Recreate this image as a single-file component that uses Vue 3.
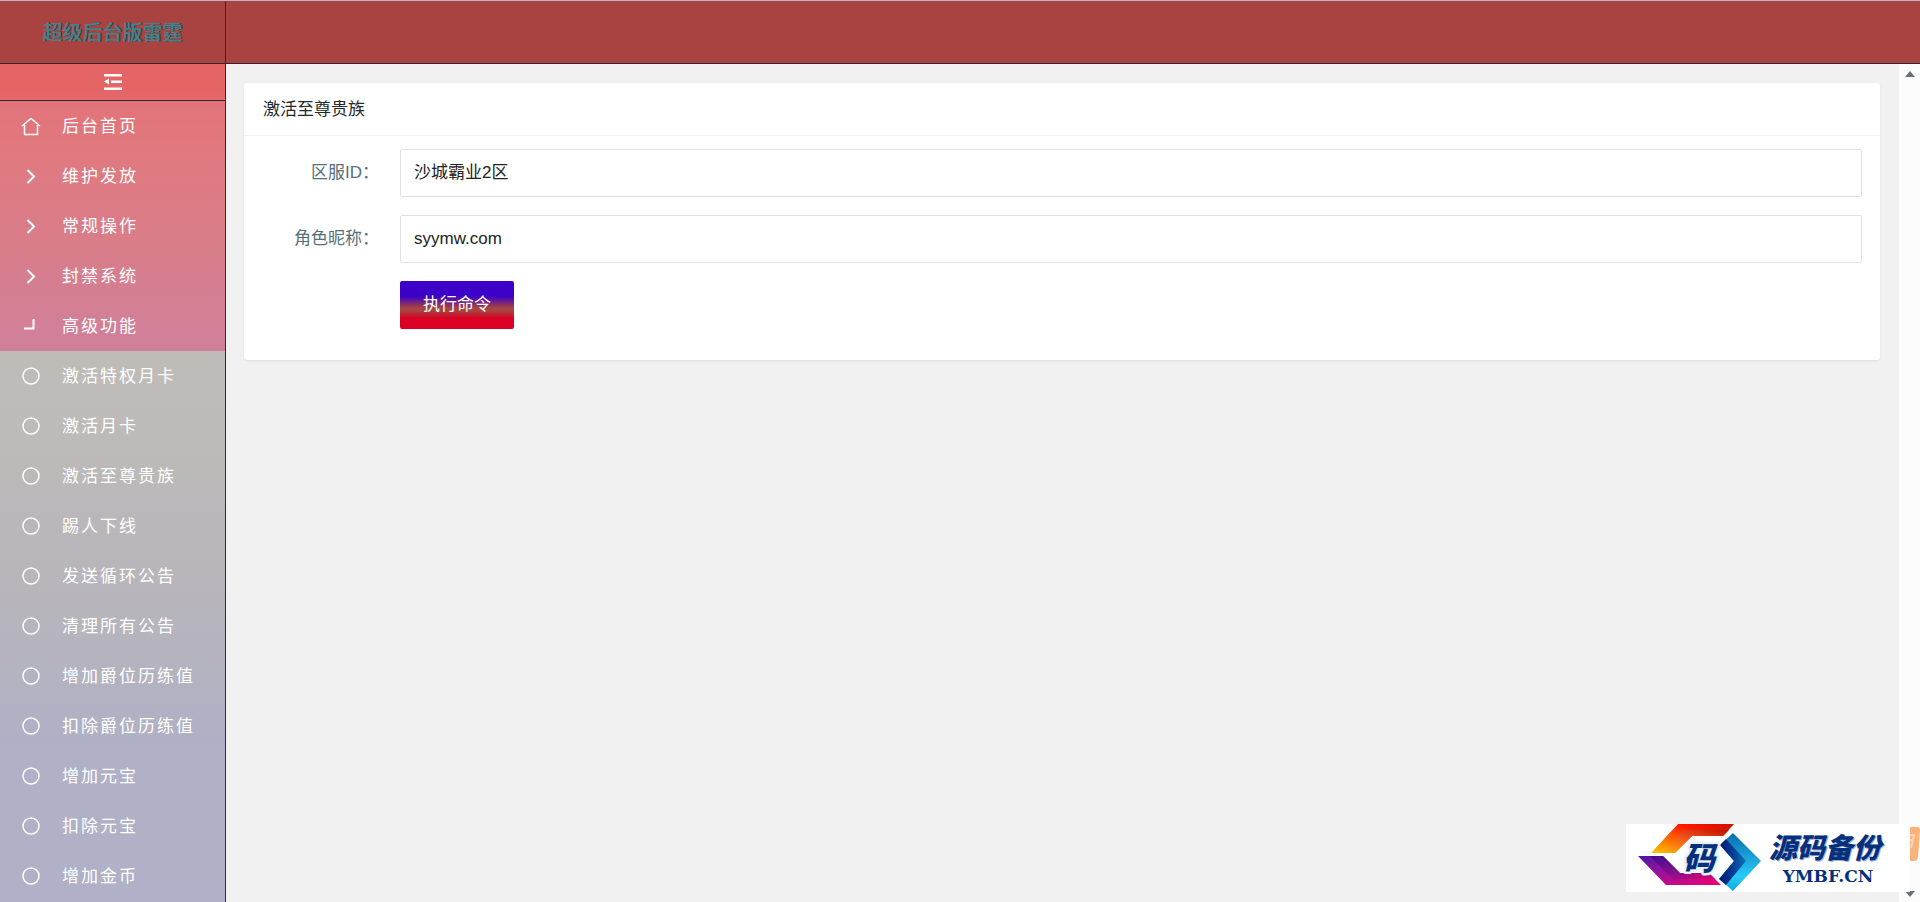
<template>
  <div class="layout">
    <header class="topbar">
      <h1 class="brand">超级后台版雷霆</h1>
    </header>

    <div class="body">
      <aside class="sidebar">
        <button class="toggle" type="button" aria-label="收起菜单">
          <svg width="18" height="16" viewBox="0 0 18 16" fill="#fff">
            <path d="M0 0h18v2.500H0zM7 6.500h11V9H7zM0 13.500h18V16H0zM0 7.500L5 4.500v6z" />
          </svg>
        </button>
        <nav>
          <ul class="menu">
            <li v-for="item in menu" :key="item.name">
              <a href="#">
                <svg class="icon" :class="{ thin: item.icon === 'home' }" viewBox="0 0 20 20">
                  <path :d="icons[item.icon]" />
                </svg>
                <span>{{ item.name }}</span>
              </a>
            </li>
          </ul>
          <ul class="menu submenu">
            <li v-for="name in children" :key="name">
              <a href="#">
                <svg class="icon thin" viewBox="0 0 20 20">
                  <circle cx="10" cy="9" r="8" />
                </svg>
                <span>{{ name }}</span>
              </a>
            </li>
          </ul>
        </nav>
      </aside>

      <main class="content">
        <section class="card">
          <h2 class="card-header">激活至尊贵族</h2>
          <form class="card-body" @submit.prevent>
            <div class="form-item">
              <label for="zone">区服ID：</label>
              <input id="zone" v-model="zone" type="text" />
            </div>
            <div class="form-item">
              <label for="role">角色昵称：</label>
              <input id="role" v-model="role" type="text" />
            </div>
            <div class="form-item actions">
              <button class="submit" type="submit">执行命令</button>
            </div>
          </form>
        </section>
      </main>

      <div class="scrollbar" aria-hidden="true">
        <svg width="10" height="6" viewBox="0 0 10 6"><path d="M5 0l5 6H0z" /></svg>
        <svg width="10" height="6" viewBox="0 0 10 6"><path d="M0 0h10L5 6z" /></svg>
      </div>
    </div>

    <div class="side-badge">
      <svg width="10" height="34" viewBox="0 0 10 34">
        <path d="M0 0h7q3 0 3 3L8 30q-1 4-4 4H0z" fill="#f8b27c" />
        <path d="M0 8h4L1 21M0 13h3" fill="none" stroke="#fbd5b5" stroke-width="2" />
      </svg>
    </div>

    <div class="watermark">
      <svg width="136" height="68" viewBox="0 0 136 68">
        <defs>
          <linearGradient id="g-top" x1="0" y1="1" x2="1" y2="0">
            <stop offset="0" stop-color="#ffc800" />
            <stop offset=".35" stop-color="#ff6a00" />
            <stop offset=".65" stop-color="#ff1a00" />
            <stop offset="1" stop-color="#c81000" />
          </linearGradient>
          <linearGradient id="g-top-in" x1="0" y1="1" x2="1" y2="0">
            <stop offset="0" stop-color="#ffb400" />
            <stop offset=".5" stop-color="#f4501e" />
            <stop offset="1" stop-color="#b81400" />
          </linearGradient>
          <linearGradient id="g-left" x1="0" y1="0" x2="1" y2="1">
            <stop offset="0" stop-color="#4a1aa0" />
            <stop offset=".45" stop-color="#a0109c" />
            <stop offset="1" stop-color="#f0006e" />
          </linearGradient>
          <linearGradient id="g-left-in" x1="0" y1="0" x2="1" y2="1">
            <stop offset="0" stop-color="#3c0c8c" />
            <stop offset=".6" stop-color="#90108c" />
            <stop offset="1" stop-color="#e0006c" />
          </linearGradient>
          <linearGradient id="g-right" x1="0" y1="0" x2="0" y2="1">
            <stop offset="0" stop-color="#0a6cac" />
            <stop offset=".75" stop-color="#28ccfa" />
            <stop offset="1" stop-color="#10a8dc" />
          </linearGradient>
          <linearGradient id="g-right-in" x1="0" y1="0" x2="1" y2="0">
            <stop offset="0" stop-color="#001474" />
            <stop offset=".5" stop-color="#063c94" />
            <stop offset="1" stop-color="#0c74b8" />
          </linearGradient>
        </defs>
        <path d="M52 0h56L97 12H66L49 29H25z" fill="url(#g-top)" />
        <path d="M58 6h45l-6 6H66L49 29H36z" fill="url(#g-top-in)" />
        <path d="M12 32h25l17 17h29l12 12H40z" fill="url(#g-left)" />
        <path d="M24 32h13l17 17h29l6 6H47z" fill="url(#g-left-in)" />
        <path d="M107 9l28 28-28 30-14-12 15-18L94 21z" fill="url(#g-right)" />
        <path d="M94 21l6-6 20 22-20 24-7-6 15-18z" fill="url(#g-right-in)" />
        <text class="mark" x="57" y="46">码</text>
      </svg>
      <div class="site">
        <span class="name">源码备份</span>
        <span class="domain">YMBF.CN</span>
      </div>
    </div>
  </div>
</template>

<script setup>
import { ref } from 'vue'

const zone = ref('沙城霸业2区')
const role = ref('syymw.com')

const icons = {
  home: 'M1 9L10 1.500L19 9M3.500 8v9.500h13V8',
  right: 'M6.500 3L13 9.500L6.500 16',
  open: 'M3 11.500h9.500V2'
}

const menu = [
  { name: '后台首页', icon: 'home' },
  { name: '维护发放', icon: 'right' },
  { name: '常规操作', icon: 'right' },
  { name: '封禁系统', icon: 'right' },
  { name: '高级功能', icon: 'open' }
]

const children = [
  '激活特权月卡',
  '激活月卡',
  '激活至尊贵族',
  '踢人下线',
  '发送循环公告',
  '清理所有公告',
  '增加爵位历练值',
  '扣除爵位历练值',
  '增加元宝',
  '扣除元宝',
  '增加金币'
]
</script>

<style>
body { margin: 0; background: #f1f1f1; }
</style>

<style scoped>
* { box-sizing: border-box; }
.layout {
  display: flex;
  flex-direction: column;
  height: 100vh;
  overflow: hidden;
  border-top: 1px solid #b9b9b9;
  font-family: "Liberation Sans", "Noto Sans CJK SC", sans-serif;
  font-size: 17px;
  color: #25282c;
}

.topbar { flex: none; display: flex; height: 63px; background: #a84341; border-bottom: 1px solid #2c2c30; }
.brand {
  width: 226px;
  margin: 0;
  border-right: 1px solid #2c2c30;
  font-size: 20px;
  font-weight: 500;
  line-height: 64px;
  text-align: center;
  color: #45828a;
  text-shadow: 1px 0 #2f3f48;
}

.body { flex: 1; display: flex; min-height: 0; }
.sidebar {
  flex: none;
  width: 226px;
  overflow: hidden;
  border-right: 1px solid #2c2c30;
  background: #b0b0c8;
}
.toggle {
  display: flex;
  align-items: center;
  justify-content: center;
  width: 100%;
  height: 37px;
  padding: 0;
  border: 0;
  border-bottom: 1px solid #2c2c30;
  background: linear-gradient(#e56466 70%, #e4686b);
  cursor: pointer;
}
.menu { margin: 0; padding: 0; list-style: none; background: linear-gradient(#e3727a, #e0797f 20%, #d97d89 55%, #d0809b); }
.submenu { background: linear-gradient(#bfbcb8, #bdbab8 15%, #b6b4bc 50%, #b0b0c6 72%, #b0b0c8); }
.menu a {
  display: flex;
  align-items: center;
  gap: 21px;
  height: 50px;
  padding: 2px 0 0 21px;
  color: #fff;
  line-height: 24px;
  letter-spacing: 2px;
  text-decoration: none;
  white-space: nowrap;
}
.icon { width: 20px; height: 20px; fill: none; stroke: #fff; stroke-width: 2; }
.icon.thin { stroke-width: 1.500; }

.content { flex: 1; min-width: 0; padding: 19px 19px 19px 18px; background: #f1f1f1; }
.card { background: #fff; border-radius: 3px; box-shadow: 0 1px 2px rgba(0, 0, 0, .08); }
.card-header {
  margin: 0;
  padding: 2px 19px 0;
  border-bottom: 1px solid #f1f1f1;
  font-size: 17px;
  font-weight: 400;
  line-height: 50px;
}
.card-body { display: flex; flex-direction: column; gap: 18px; padding: 13px 18px 31px 0; }
.form-item { display: flex; height: 48px; }
.form-item label { flex: none; width: 156px; padding-right: 21px; line-height: 48px; text-align: right; color: #567078; }
.form-item input {
  flex: 1;
  min-width: 0;
  padding: 0 13px;
  border: 1px solid #e3e1e1;
  border-radius: 2px;
  background: #fff;
  font: inherit;
  line-height: 24px;
  color: #222;
}
.actions { padding-left: 156px; }
.submit {
  padding: 0 23px;
  border: 0;
  border-radius: 2px;
  background: linear-gradient(#3c00c8 32%, #a84341 56%, #a84341 62%, #dc0024 78%);
  font: inherit;
  line-height: 24px;
  color: #fff;
  cursor: pointer;
}

.scrollbar {
  flex: none;
  display: flex;
  flex-direction: column;
  align-items: center;
  justify-content: space-between;
  width: 21px;
  padding: 7px 0 5px;
  background: #fcfcfc;
  fill: #64707a;
}

.side-badge { position: absolute; right: 0; bottom: 41px; height: 34px; }
.watermark {
  position: absolute;
  right: 10px;
  bottom: 10px;
  display: flex;
  width: 284px;
  height: 68px;
  background: #fff;
  color: #06307c;
}
.mark {
  font-family: "Noto Sans CJK SC", sans-serif;
  font-size: 32px;
  font-style: italic;
  font-weight: 900;
  fill: #06307c;
  stroke: #e6f2fc;
  stroke-width: 5;
  stroke-linejoin: round;
  paint-order: stroke;
}
.site { display: flex; flex: 1; flex-direction: column; align-items: center; padding: 2px 22px 0 0; white-space: nowrap; }
.name {
  font-family: "Noto Sans CJK SC", sans-serif;
  font-size: 28px;
  font-weight: 900;
  line-height: 40px;
  font-style: italic;
  text-shadow: 1px 1px #9fb0d4;
}
.domain { padding-left: 6px; font-family: "DejaVu Serif", serif; font-size: 17px; font-weight: 700; line-height: 20px; }
</style>
